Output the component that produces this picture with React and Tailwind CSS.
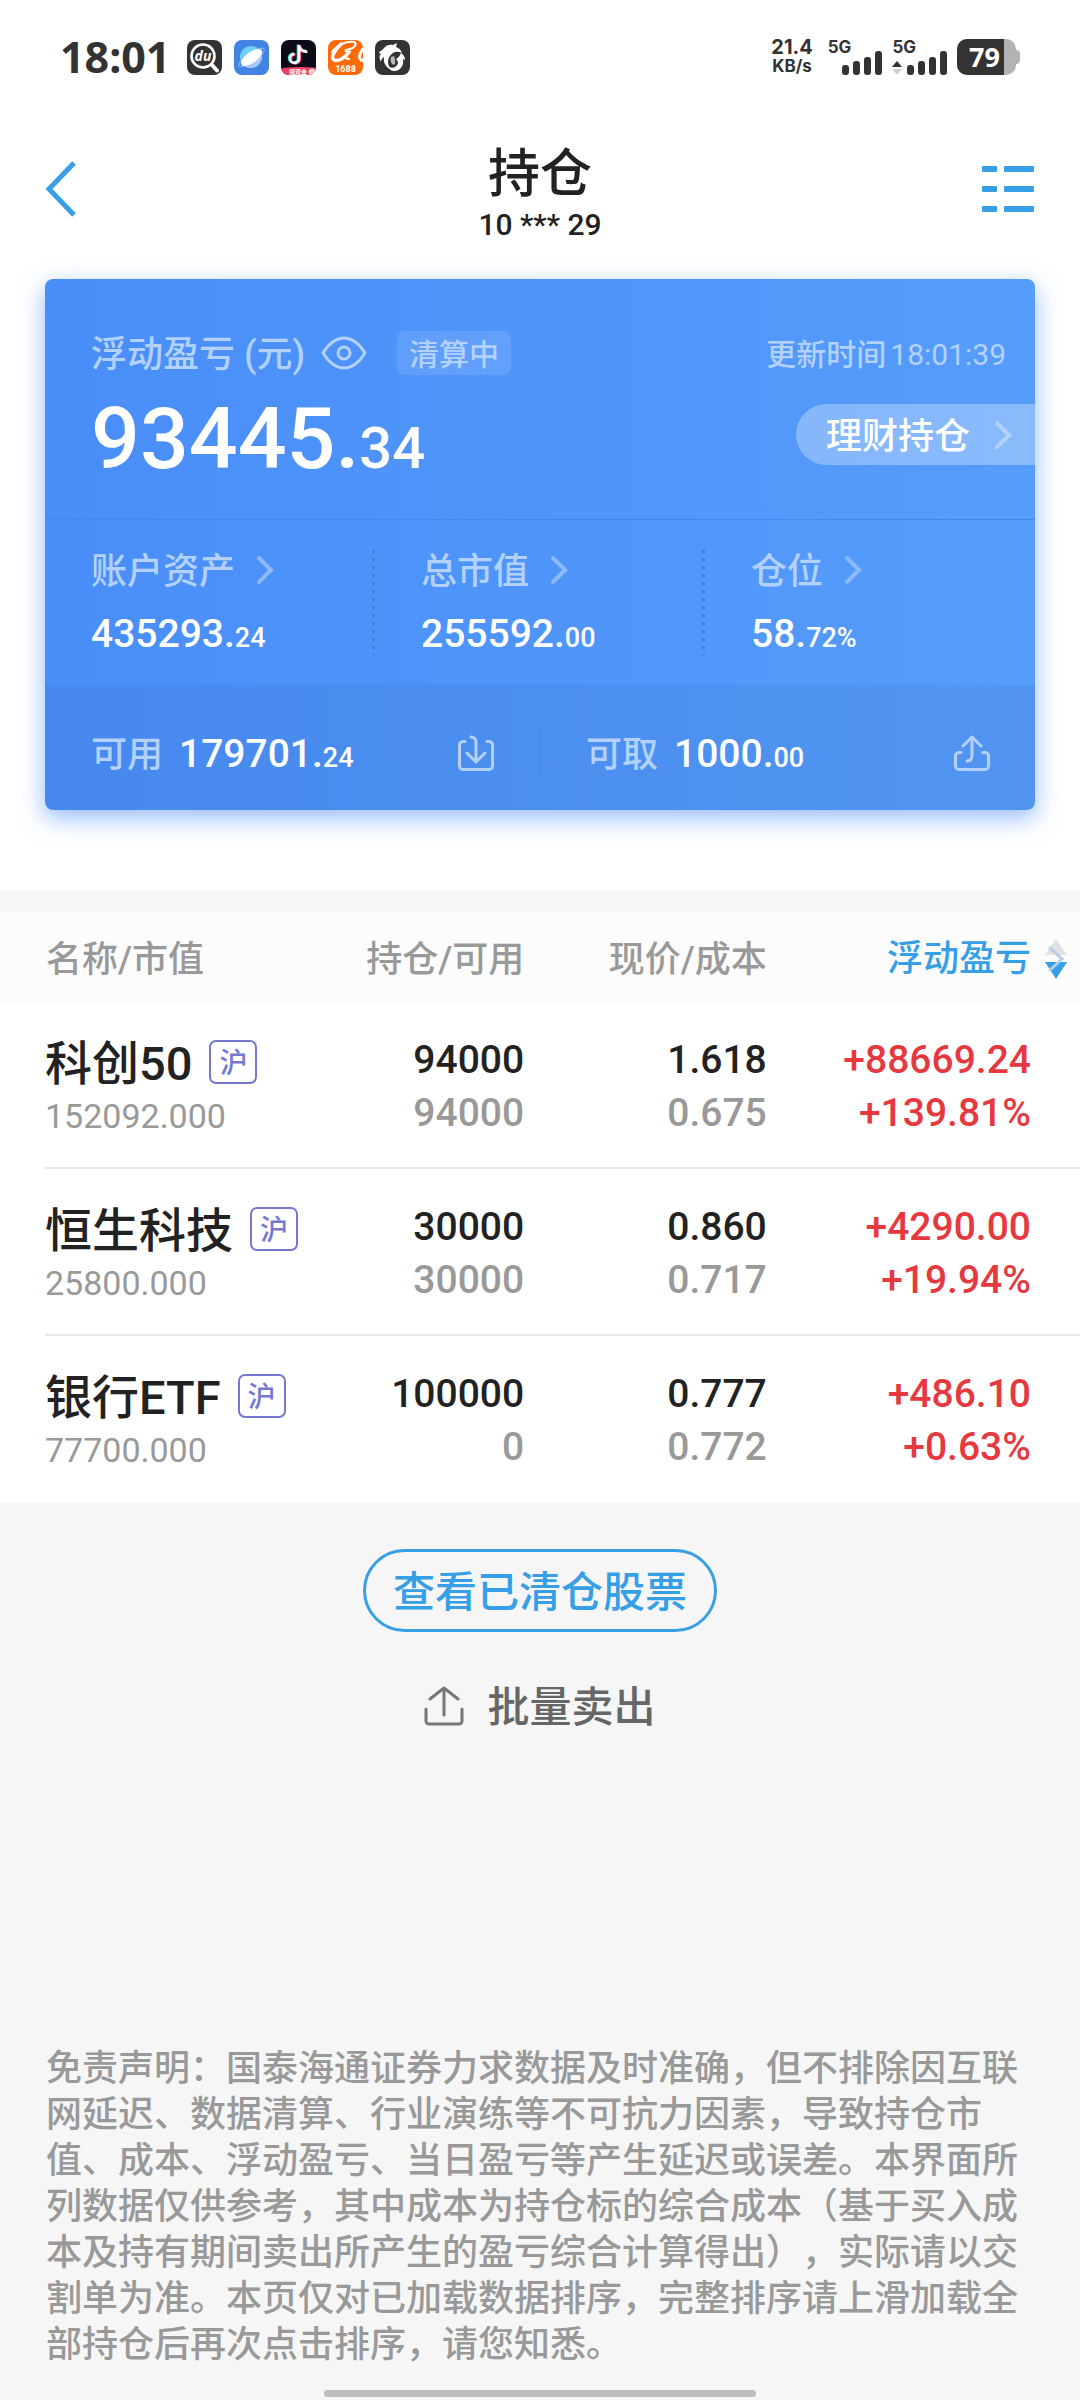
import React, { useState } from "react";

const holdings = [
  { name: "科创50", value: "152092.000", amount: "94000", usable: "94000", price: "1.618", cost: "0.675", profit: "+88669.24", rate: "+139.81%" },
  { name: "恒生科技", value: "25800.000", amount: "30000", usable: "30000", price: "0.860", cost: "0.717", profit: "+4290.00", rate: "+19.94%" },
  { name: "银行ETF", value: "77700.000", amount: "100000", usable: "0", price: "0.777", cost: "0.772", profit: "+486.10", rate: "+0.63%" },
];

const stats = [
  { label: "账户资产", int: "435293.", dec: "24" },
  { label: "总市值", int: "255592.", dec: "00" },
  { label: "仓位", int: "58.", dec: "72%" },
];

const Chevron = ({ className }) => (
  <svg viewBox="0 0 18 30" className={`w-[18px] h-[30px] ${className}`} fill="none" stroke="currentColor" strokeWidth="4" strokeLinecap="round">
    <path d="M3 3l12 12L3 27" />
  </svg>
);

const Signal = () => (
  <svg viewBox="0 0 40 24" className="w-[40px] h-[24px]" fill="#333">
    <rect x="0" y="14" width="7" height="10" rx="3" />
    <rect x="11" y="10" width="7" height="14" rx="3" />
    <rect x="22" y="6" width="7" height="18" rx="3" />
    <rect x="33" y="0" width="7" height="24" rx="3" />
  </svg>
);

const AppIcons = () => (
  <div className="flex gap-[12px]">
    <svg viewBox="0 0 35 35" className="size-[35px]">
      <rect width="35" height="35" rx="8" fill="#333" />
      <circle cx="16" cy="16" r="11.5" fill="none" stroke="#fff" strokeWidth="2.6" />
      <path d="M25 25l5 5.5" stroke="#fff" strokeWidth="4" strokeLinecap="round" />
      <text x="16" y="21" textAnchor="middle" fontSize="14" fontWeight="700" fontStyle="italic" fontFamily="Open Sans, sans-serif" fill="#fff">du</text>
    </svg>
    <svg viewBox="0 0 35 35" className="size-[35px]">
      <rect width="35" height="35" rx="8" fill="#4482e4" />
      <circle cx="17" cy="17" r="11" fill="#6ed0fa" />
      <path d="M8 24c6 6 16 6 20-6l-3-5z" fill="#a9c8f6" />
      <ellipse cx="17.5" cy="17.5" rx="15" ry="4.5" fill="none" stroke="#8db6f2" strokeWidth="1" transform="rotate(-34 17.5 17.5)" />
      <ellipse cx="17.5" cy="17.5" rx="12.5" ry="5.5" fill="#fff" transform="rotate(-36 17.5 17.5)" />
    </svg>
    <svg viewBox="0 0 35 35" className="size-[35px]">
      <defs>
        <clipPath id="videoClip"><rect width="35" height="35" rx="8" /></clipPath>
      </defs>
      <g clipPath="url(#videoClip)">
        <rect width="35" height="35" fill="#0b0a16" />
        <g fill="none" strokeWidth="2.6">
          <path d="M17 4.500v13.500a4.500 4.500 0 1 1-4.500-4.500M17 5c.5 4 4 6 8 6" stroke="#35e6e2" />
          <path d="M19 5.500v13.500a4.500 4.500 0 1 1-4.500-4.500M19 6c.5 4 4 6 8 6" stroke="#fb3a5c" />
          <path d="M18 5v13.500a4.500 4.500 0 1 1-4.500-4.500M18 5.500c.5 4 4 6 8 6" stroke="#fff" />
        </g>
        <path d="M0 28.500C10 26.500 25 26.500 35 28v7H0z" fill="#ee3f62" />
        <circle cx="31" cy="32" r="3.5" fill="#fbd5c4" />
        <text x="17" y="34" textAnchor="middle" fontSize="6" fontWeight="700" fontFamily="Noto Sans CJK SC, sans-serif" fill="#fff">领双金</text>
      </g>
    </svg>
    <svg viewBox="0 0 35 35" className="size-[35px]">
      <defs>
        <clipPath id="shopClip"><rect width="35" height="35" rx="8" /></clipPath>
      </defs>
      <g clipPath="url(#shopClip)">
        <rect width="35" height="35" fill="#fd6a0a" />
        <g fill="none" stroke="#fff" strokeLinecap="round">
          <path d="M4 12C9 5 18 1 26 2" strokeWidth="2" />
          <path d="M13 4C8 9 2 17 6 20c4 2 11-2 15-8" strokeWidth="3.4" />
          <path d="M26 2c4 2 0 7-8 8-1 1 0 2 3 2-3 3-5 7 0 7" strokeWidth="2.2" />
          <path d="M35 9c-3 4-5 9-2 11 1 1 2 0 3-1" strokeWidth="3" />
        </g>
        <text x="17.5" y="32" textAnchor="middle" fontSize="9" fontWeight="700" fontFamily="Roboto, sans-serif" fill="#fff">1688</text>
      </g>
    </svg>
    <svg viewBox="0 0 35 35" className="size-[35px]">
      <rect width="35" height="35" rx="8" fill="#333" />
      <path d="M4 12c1-1 4-2 5-4 2-3 6-4 9-3l4-2-1 4c3 1 5 3 6 6-3-1-6-2-9 0-3 2-5 5-5 9 0 3 2 6 4 8-6-2-9-7-8-13-2 1-3 3-3 5-2-4-2-6 0-8-1 0-2-1-2-2z" fill="#fff" />
      <path d="M14 27c4 2 8 0 9-4 0-2-1-3-2-4 2-1 4-3 5-6 3 2 4 4 4 7l-2-1c1 6-2 12-9 12-3 0-5-2-5-4z" fill="#fff" />
      <path d="M16 17c-1 4 0 7 3 8 2-2 1-6 0-9z" fill="#bbb" />
    </svg>
  </div>
);

const StatusBar = () => (
  <div className="flex justify-between items-center h-[76px] pt-[38px] px-[60px] font-['Noto_Sans','Noto_Sans_CJK_SC',sans-serif] font-bold text-[#333]">
    <div className="flex items-center gap-[17px]">
      <span className="text-[43px] leading-[36px]">18:01</span>
      <AppIcons />
    </div>

    <div className="flex items-center font-['Inter',sans-serif]">
      <div className="flex flex-col items-center text-[20px] leading-[19px] mr-[15px]">
        <span>21.4</span>
        <span className="text-[17px]">KB/s</span>
      </div>
      <div className="flex items-end h-[36px] mr-[10px]">
        <span className="self-start text-[17px] leading-[16px] -mr-[9px]">5G</span>
        <Signal />
      </div>
      <div className="flex items-end h-[36px] mr-[10px]">
        <div className="flex flex-col justify-between h-full -mr-[9px]">
          <span className="text-[17px] leading-[16px]">5G</span>
          <svg viewBox="0 0 10 14" className="w-[10px] h-[14px]">
            <path d="M0 6l5-6 5 6z" fill="#333" />
            <path d="M0 8l5 6 5-6z" fill="#d0d0d0" />
          </svg>
        </div>
        <Signal />
      </div>
      <div className="flex items-center">
        <div className="w-[59px] h-[36px] rounded-[10px] bg-[#b3b3b3]">
          <div className="w-[47px] h-[36px] pl-[12px] rounded-l-[10px] bg-[#333] text-white text-[27px] leading-[36px] font-['Open_Sans',sans-serif]">79</div>
        </div>
        <div className="w-[4px] h-[14px] bg-[#b3b3b3] rounded-r-[4px]"></div>
      </div>
    </div>
  </div>
);

const App = () => {
  const [hidden, setHidden] = useState(false);
  const [desc, setDesc] = useState(true);

  const rows = desc ? holdings : [...holdings].reverse();

  return (
    <main lang="zh-CN" className="min-h-screen flex flex-col bg-[#f6f6f6] text-[#222] font-['Roboto','Noto_Sans_CJK_SC',sans-serif] font-medium">
      <div className="bg-white pb-[81px]">
        <StatusBar />

        <header className="flex justify-between items-start pt-[60px] px-[45px]">
          <button aria-label="返回" className="mt-[25px] w-[54px]">
            <svg viewBox="0 0 32 56" className="w-[32px] h-[56px]" fill="none" stroke="#379fe6" strokeWidth="5">
              <path d="M29 2L4 28l25 26" />
            </svg>
          </button>
          <div className="flex flex-col items-center">
            <h1 className="text-[52px] leading-[78px]">持仓</h1>
            <span className="text-[30px] leading-[22px]">10 *** 29</span>
          </div>
          <button aria-label="菜单" className="mt-[30px]">
            <svg viewBox="0 0 54 46" className="w-[54px] h-[46px]" fill="#379fe6">
              <rect x="1" y="0" width="15" height="6" rx="1" />
              <rect x="23" y="0" width="30" height="6" rx="1" />
              <rect x="1" y="20" width="15" height="6" rx="1" />
              <rect x="23" y="20" width="30" height="6" rx="1" />
              <rect x="1" y="40" width="15" height="6" rx="1" />
              <rect x="23" y="40" width="30" height="6" rx="1" />
            </svg>
          </button>
        </header>

        <section className="mx-[45px] mt-[43px] rounded-[8px] overflow-hidden text-white bg-linear-to-r from-[#498ef8] to-[#569cfb] shadow-[0_8px_24px_rgba(73,142,248,0.6)]">
          <div className="flex justify-between h-[241px] pl-[46px] pt-[52px] border-b border-[#4488ee]">
            <div>
              <div className="flex items-center h-[44px] text-[#b3d1fd]">
                <span className="pt-[4px] text-[36px]">浮动盈亏 (元)</span>
                <button aria-label="显示金额" className="ml-[16px]" onClick={() => setHidden(!hidden)}>
                  <svg viewBox="0 0 46 34" className="w-[46px] h-[34px]" fill="none" stroke="#b3d1fd" strokeWidth="3">
                    <path d="M2 17C7 9 13 2 23 2s16 7 21 15c-5 8-11 15-21 15S7 25 2 17z" strokeLinejoin="round" />
                    <circle cx="23" cy="17" r="6" />
                  </svg>
                </button>
                <span className="ml-[30px] h-[44px] px-[12px] rounded-[8px] bg-white/10 text-[30px] leading-[48px]">清算中</span>
              </div>
              <div className="text-[86px] leading-[100px] mt-[14px]">
                {hidden ? "****" : <>93445.<span className="text-[58px]">34</span></>}
              </div>
            </div>

            <div className="flex flex-col items-end">
              <span className="h-[44px] mr-[29px] text-[30px] leading-[48px] text-[#b3d1fd]">
                更新时间<span className="ml-[4px] font-normal">18:01:39</span>
              </span>
              <button className="flex items-center mt-[29px] h-[61px] pl-[30px] pr-[23px] rounded-l-full bg-white/30 text-[36px]">
                <span className="pt-[4px]">理财持仓</span>
                <Chevron className="ml-[24px] text-[#b3d1fd]" />
              </button>
            </div>
          </div>

          <div className="grid grid-cols-3 py-[30px]">
            {stats.map((item, i) => (
              <div key={item.label} className="flex h-[105px]">
                <div className="flex-1 pl-[46px]">
                  <button className="flex items-center h-[40px] text-[36px] text-[#b3d1fd]">
                    <span className="pt-[4px]">{item.label}</span>
                    <Chevron className="ml-[21px] text-[#8cbafb]" />
                  </button>
                  <div className="mt-[20px] text-[39px] leading-[48px]">
                    {item.int}<span className="text-[27px]">{item.dec}</span>
                  </div>
                </div>
                {i < 2 && (
                  <svg className="w-[3px] h-full" stroke="#4080de" strokeWidth="3" strokeDasharray="3 5">
                    <line x1="1.5" y1="0" x2="1.5" y2="105" />
                  </svg>
                )}
              </div>
            ))}
          </div>

          <div className="grid grid-cols-2 h-[125px] bg-black/4 items-center pt-[10px]">
            <div className="flex items-center justify-between pl-[46px] pr-[45px] h-[42px] border-r border-[#4383e2]">
              <div className="flex items-baseline pt-[4px] text-[39px]">
                <span className="mr-[16px] text-[36px] text-[#b3d1fd]">可用</span>
                179701.<span className="text-[27px]">24</span>
              </div>
              <button aria-label="转入">
                <svg viewBox="0 0 36 36" className="size-[36px]" fill="none" stroke="#b3d1fd" strokeWidth="3" strokeLinecap="round" strokeLinejoin="round">
                  <path d="M7 6.500H5A3.500 3.500 0 0 0 1.500 10v21A3.500 3.500 0 0 0 5 34.500h26a3.500 3.500 0 0 0 3.500-3.500V10A3.500 3.500 0 0 0 31 6.500h-2" />
                  <path d="M13 2c4 0 5 2 5 6v18M9 18l9 9 9-9" />
                </svg>
              </button>
            </div>
            <div className="flex items-center justify-between pl-[46px] pr-[45px] h-[42px]">
              <div className="flex items-baseline pt-[4px] text-[39px]">
                <span className="mr-[16px] text-[36px] text-[#b3d1fd]">可取</span>
                1000.<span className="text-[27px]">00</span>
              </div>
              <button aria-label="转出">
                <svg viewBox="0 0 36 36" className="size-[36px]" fill="none" stroke="#b3d1fd" strokeWidth="3" strokeLinecap="round" strokeLinejoin="round">
                  <path d="M7 17.500H5A3.500 3.500 0 0 0 1.500 21v10A3.500 3.500 0 0 0 5 34.500h26a3.500 3.500 0 0 0 3.500-3.500V21a3.500 3.500 0 0 0-3.500-3.500h-2" />
                  <path d="M13 26c4 0 5-2 5-6V2M9 11l9-9 9 9" />
                </svg>
              </button>
            </div>
          </div>
        </section>
      </div>

      <table className="w-full table-fixed mt-[21px] bg-white text-right">
        <thead>
          <tr className="h-[90px] bg-[#fcfcfc] text-[36px] text-[#999]">
            <th className="w-[28%] pt-[6px] pl-[46px] text-left font-medium">名称/市值</th>
            <th className="w-[21%] pt-[6px] pr-[5px] font-medium">持仓/可用</th>
            <th className="w-[22%] pt-[6px] font-medium">现价/成本</th>
            <th className="pt-[4px] font-medium">
              <button className="flex items-center ml-auto pr-[12px] text-[#379fe6]" onClick={() => setDesc(!desc)}>
                浮动盈亏
                <svg viewBox="0 0 24 40" className="w-[24px] h-[40px] ml-[13px]">
                  <path d="M12 0l11 16H1z" fill="#dfe3e6" />
                  <path d="M1 23h22L12 40z" fill="#379fe6" />
                  <path d="M6 9l12 11L6 31" fill="none" stroke="#b8cfe8" strokeWidth="3" strokeLinecap="round" />
                </svg>
              </button>
            </th>
          </tr>
        </thead>
        <tbody className="text-[39px] leading-[53px]">
          {rows.map((item) => (
            <tr key={item.name} className="group">
              <td className="pl-[45px] text-left">
                <div className="h-[167px] pt-[32px] border-b-2 border-[#e8e8e8] group-last:border-white">
                  <div className="flex items-center h-[56px] text-[47px]">
                    <span className="pt-[2px]">{item.name}</span>
                    <span className="ml-[17px] w-[48px] h-[44px] border-2 border-[#7478d0] rounded-[7px] text-[28px] leading-[43px] text-center text-[#7478d0]">沪</span>
                  </div>
                  <div className="text-[34px] text-[#999] font-normal">{item.value}</div>
                </div>
              </td>
              <td>
                <div className="h-[167px] pt-[32px] pr-[5px] border-b-2 border-[#e8e8e8] group-last:border-white">
                  <div>{item.amount}</div>
                  <div className="text-[#999]">{item.usable}</div>
                </div>
              </td>
              <td>
                <div className="h-[167px] pt-[32px] border-b-2 border-[#e8e8e8] group-last:border-white">
                  <div>{item.price}</div>
                  <div className="text-[#999]">{item.cost}</div>
                </div>
              </td>
              <td>
                <div className="h-[167px] pt-[32px] pr-[49px] border-b-2 border-[#e8e8e8] group-last:border-white text-[#e5393f]">
                  <div>{item.profit}</div>
                  <div>{item.rate}</div>
                </div>
              </td>
            </tr>
          ))}
        </tbody>
      </table>

      <div className="flex flex-col items-center pt-[46px]">
        <button className="h-[83px] px-[27px] pt-[4px] rounded-full border-3 border-[#379fe6] text-[42px] text-[#379fe6]">查看已清仓股票</button>
        <button className="flex items-center gap-[23px] mt-[40px] text-[42px] text-[#666]">
          <svg viewBox="0 0 40 40" className="size-[40px]" fill="none" stroke="#777" strokeWidth="3" strokeLinecap="round" strokeLinejoin="round">
            <path d="M2 23v12a3 3 0 0 0 3 3h30a3 3 0 0 0 3-3V23" />
            <path d="M20 29V2M6 13L20 2l14 11" />
          </svg>
          <span className="pt-[4px]">批量卖出</span>
        </button>
      </div>

      <p className="mt-auto px-[46px] pb-[22px] text-[36px] leading-[46px] text-[#999] [text-spacing-trim:space-all]">
        免责声明：国泰海通证券力求数据及时准确，但不排除因互联网延迟、数据清算、行业演练等不可抗力因素，导致持仓市值、成本、浮动盈亏、当日盈亏等产生延迟或误差。本界面所列数据仅供参考，其中成本为持仓标的综合成本（基于买入成本及持有期间卖出所产生的盈亏综合计算得出），实际请以交割单为准。本页仅对已加载数据排序，完整排序请上滑加载全部持仓后再次点击排序，请您知悉。
      </p>
      <div className="self-center w-[40%] h-[7px] mb-[3px] rounded-full bg-[#bdbdbd]"></div>
    </main>
  );
};

export default App;
